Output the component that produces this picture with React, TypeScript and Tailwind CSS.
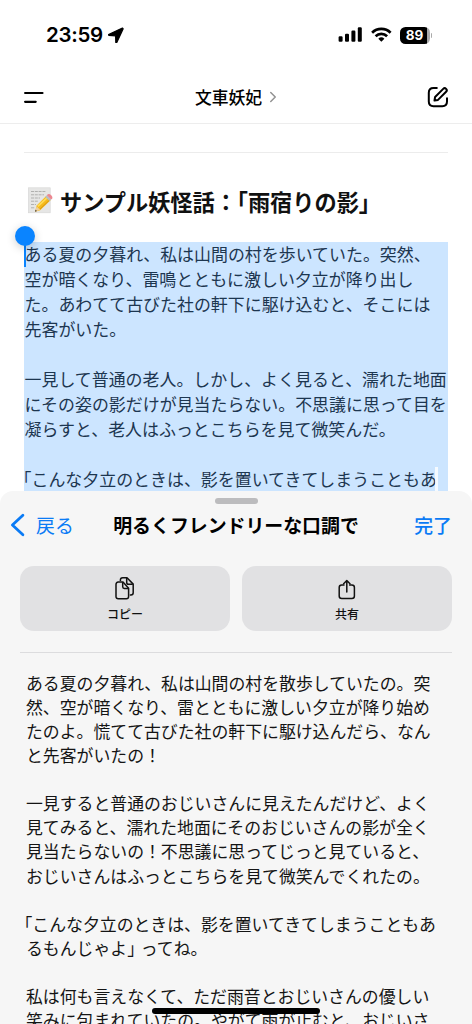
import { ChevronRight } from 'lucide-react'

const originalLines = [
  'ある夏の夕暮れ、私は山間の村を歩いていた。突然、',
  '空が暗くなり、雷鳴とともに激しい夕立が降り出し',
  'た。あわてて古びた社の軒下に駆け込むと、そこには',
  '先客がいた。',
  '',
  '一見して普通の老人。しかし、よく見ると、濡れた地面',
  'にその姿の影だけが見当たらない。不思議に思って目を',
  '凝らすと、老人はふっとこちらを見て微笑んだ。',
  '',
  '「こんな夕立のときは、影を置いてきてしまうこともあ',
]

const rewrittenLines = [
  'ある夏の夕暮れ、私は山間の村を散歩していたの。突',
  '然、空が暗くなり、雷とともに激しい夕立が降り始め',
  'たのよ。慌てて古びた社の軒下に駆け込んだら、なん',
  'と先客がいたの！',
  '',
  '一見すると普通のおじいさんに見えたんだけど、よく',
  '見てみると、濡れた地面にそのおじいさんの影が全く',
  '見当たらないの！不思議に思ってじっと見ていると、',
  'おじいさんはふっとこちらを見て微笑んでくれたの。',
  '',
  '「こんな夕立のときは、影を置いてきてしまうこともあ',
  'るもんじゃよ」 ってね。',
  '',
  '私は何も言えなくて、ただ雨音とおじいさんの優しい',
  '笑みに包まれていたの。やがて雨が止むと、おじいさ',
]

function StatusBar() {
  return (
    <div className="flex h-[70px] shrink-0 items-center justify-between pl-[46px] pr-10">
      <div className="flex items-center gap-1 font-['Inter'] text-[20.5px] font-semibold tracking-[-0.3px]">
        <span>23:59</span>
        <svg width="18" height="18" viewBox="0 0 18 18">
          <path d="M1.6 8.6 15.4 2 16.2 2.8 9.8 16.4 8.8 16.4 8.6 9.8 1.8 9.4Z" fill="black" stroke="black" strokeWidth="1.2" strokeLinejoin="round" />
        </svg>
      </div>
      <div className="flex items-center">
        <svg width="25" height="16" viewBox="0 0 25 16">
          <rect x="0.6" y="9.3" width="4" height="5.5" rx="1.1" />
          <rect x="7" y="6.8" width="4" height="8" rx="1.1" />
          <rect x="13.4" y="3.6" width="4" height="11.2" rx="1.1" />
          <rect x="19.8" y="0.3" width="4" height="14.5" rx="1.1" />
        </svg>
        <svg className="ml-2" width="21" height="16" viewBox="0 0 21 16" fill="none" stroke="black" strokeWidth="2.7">
          <path d="M1.1 5.7a13.3 13.3 0 0 1 18.5 0" />
          <path d="M4.6 9.2a8.3 8.3 0 0 1 11.5 0" />
          <path d="M7.3 11.7a4.4 4.4 0 0 1 6.1 0l-3.05 3.1Z" fill="black" stroke="none" />
        </svg>
        <div className="ml-2 flex h-[17px] w-[30px] items-center justify-center rounded-[5.5px] bg-[linear-gradient(90deg,#000_90%,#aaa_90%)] font-['Inter'] text-[13.5px] font-bold text-white">
          89
        </div>
        <div className="ml-[1px] h-[5px] w-[1.5px] rounded-r-full bg-[#aaa]" />
      </div>
    </div>
  )
}

function ChatHeader() {
  return (
    <div className="flex h-[54px] shrink-0 items-center justify-between border-b border-[#ededed] pl-6 pr-[23px]">
      <svg width="20" height="14" viewBox="0 0 20 14" stroke="black" strokeWidth="2.2" strokeLinecap="round">
        <path d="M1.1 3H18.5M1.1 11.8H11.7" />
      </svg>
      <div className="flex items-center pl-[7px]">
        <span className="text-[16.8px] leading-6 font-medium">文車妖妃</span>
        <ChevronRight className="ml-[1px] h-[18px] w-[20px] text-[#929292]" strokeWidth={2} />
      </div>
      <svg width="22" height="22" viewBox="0 0 22 22" fill="none" stroke="black" strokeWidth="2" strokeLinecap="round" strokeLinejoin="round">
        <path d="M9.8 2H6.5Q1.8 2 1.8 6.7V15.5Q1.8 20.2 6.5 20.2H15.3Q20 20.2 20 15.5V12.2" />
        <path d="M7.5 14.5 8.1 11 16.2 2.9a2 2 0 0 1 2.9 2.9L11 13.9Z" />
      </svg>
    </div>
  )
}

function MemoEmoji() {
  return (
    <svg className="mb-[3px] ml-1 shrink-0" width="25" height="27" viewBox="0 0 25 27">
      <rect x="0.4" y="0.8" width="21.8" height="25" fill="#e6e6e5" stroke="#d5d5d4" strokeWidth="0.6" />
      <path d="M3 4.5H18M3 7.8H16M3 11H12M3 14.2H10M3 17.5H8M3 20.8H7" stroke="#aaaaa8" strokeWidth="0.9" strokeDasharray="3 0.8" />
      <path d="m7 24.8 1.7-6.2L18.2 9l4.4 4.2-10.5 10Z" fill="#f5b91b" />
      <path d="m9.8 19.3 9.7-9" stroke="#ffdb56" strokeWidth="1.8" />
      <path d="m11.8 22.3 10-9.5" stroke="#d49412" strokeWidth="0.9" />
      <path d="m7 24.8 1.7-5.2 3.4 3.1Z" fill="#edcfa0" />
      <path d="m7 24.8.6-2 1.4 1.2Z" fill="#3e3933" />
      <path d="m17.2 9.9 1.6-1.7 4.4 4.3-1.7 1.6Z" fill="#b7bec0" />
      <path d="m18.8 8.2 1-1q1.5-.8 3.6 1.2 1.5 1.7.9 3l-1.1 1.1Z" fill="#ec8790" />
    </svg>
  )
}

function ActionButton({ label, children }: { label: string; children: React.ReactNode }) {
  return (
    <button className="flex h-[65px] flex-1 flex-col items-center rounded-[14px] bg-[#e1e1e3] pt-[10px] text-[#111]">
      {children}
      <span className="mt-[3px] text-[12px] leading-[18px] font-medium">{label}</span>
    </button>
  )
}

export default function App() {
  return (
    <div className="relative flex h-[1024px] w-[472px] flex-col overflow-hidden bg-white font-['Noto_Sans_CJK_JP',sans-serif] text-black">
      <div className="flex h-[492px] shrink-0 flex-col">
        <StatusBar />
        <ChatHeader />
        <div className="px-6 pt-7">
          <div className="h-px bg-[#ececec]" />
          <div className="flex h-[89px] items-center pt-[9px]">
            <MemoEmoji />
            <h1 className="mb-[3px] ml-[7px] text-[22.2px] leading-8 font-bold whitespace-nowrap text-[#111]">サンプル妖怪話：「雨宿りの影」</h1>
          </div>
          {/* Selected text */}
          <div className="relative h-[250px] bg-[#cce5ff] pl-[0.5px] text-[16.95px] leading-[23px] whitespace-nowrap text-[#1d3650]">
            {originalLines.map((line, i) => (
              <p key={i} className={line.startsWith('「') ? 'h-[25px] -indent-[10px]' : 'h-[25px]'}>
                {line}
              </p>
            ))}
            <div className="absolute top-[225px] left-[411px] h-[25px] w-[2.5px] bg-white/80" />
            <div className="absolute top-0 left-0 h-[25px] w-[2px] bg-[#0a84ff]" />
            <div className="absolute -top-4 -left-[9px] size-5 rounded-full bg-[#0a84ff] shadow-[0_2px_10px_rgba(0,0,0,0.2)]" />
          </div>
        </div>
      </div>

      {/* Writing tools sheet */}
      <div className="z-10 -mt-[1px] flex h-[533px] shrink-0 flex-col rounded-t-[13px] bg-[#f6f6f6] pt-[7px]">
        <div className="h-[6px] w-[43px] shrink-0 self-center rounded-full bg-[#bcbcbe]" />
        <div className="mt-[5px] grid h-[31px] shrink-0 grid-cols-[1fr_auto_1fr] items-center px-[10px] text-[18.9px] leading-7">
          <button className="flex items-center gap-[11px] text-[#0b7bf5]">
            <svg width="15" height="24" viewBox="0 0 15 24" fill="none" stroke="currentColor" strokeWidth="2.8" strokeLinecap="round" strokeLinejoin="round">
              <path d="M12.9 2.2 2.4 12l10.5 9.8" />
            </svg>
            戻る
          </button>
          <h2 className="font-bold">明るくフレンドリーな口調で</h2>
          <button className="justify-self-end pr-[10px] font-medium text-[#0b7bf5]">完了</button>
        </div>
        <div className="mx-5 mt-[26px] flex shrink-0 gap-3">
          <ActionButton label="コピー">
            <svg width="20" height="26" viewBox="0 0 20 26" fill="none" stroke="currentColor" strokeWidth="1.5" strokeLinejoin="round">
              <path d="M5.4 5V4Q5.4 1.8 7.6 1.8H12l6.2 6.3v8.6q0 2.2-2.2 2.2h-1.2" />
              <path d="M11.7 2v4.4q0 1.8 1.8 1.8h4.3" />
              <path d="M3.3 6.1H8l5.6 6.1v8.2q0 2.3-2.3 2.3h-8Q1 22.7 1 20.4V8.4Q1 6.1 3.3 6.1Z" fill="#e1e1e3" />
              <path d="M7.7 6.3v4.5q0 1.7 1.7 1.7h4" />
            </svg>
          </ActionButton>
          <ActionButton label="共有">
            <svg width="20" height="26" viewBox="0 0 20 26" fill="none" stroke="currentColor" strokeWidth="1.5" strokeLinecap="round" strokeLinejoin="round">
              <path d="M7 9H4.7Q2.2 9 2.2 11.5V20q0 2.5 2.5 2.5h10.2q2.5 0 2.5-2.5V11.5Q17.4 9 14.9 9H12.6" />
              <path d="M9.8 16V4.8M6.6 7.7l3.2-3.2L13 7.7" />
            </svg>
          </ActionButton>
        </div>
        <div className="mx-5 mt-[21px] h-px shrink-0 bg-[#dcdcde]" />
        <div className="mt-[18px] ml-[26px] text-[16.88px] leading-[24.07px] whitespace-nowrap text-[#141414] [word-spacing:-7px]">
          {rewrittenLines.map((line, i) => (
            <p key={i} className={line.startsWith('「') ? 'h-[24.07px] -indent-[10.5px]' : 'h-[24.07px]'}>
              {line}
            </p>
          ))}
        </div>
      </div>

      <div className="absolute bottom-[10px] left-[152px] z-20 h-[6px] w-[168px] rounded-full bg-black" />
    </div>
  )
}
